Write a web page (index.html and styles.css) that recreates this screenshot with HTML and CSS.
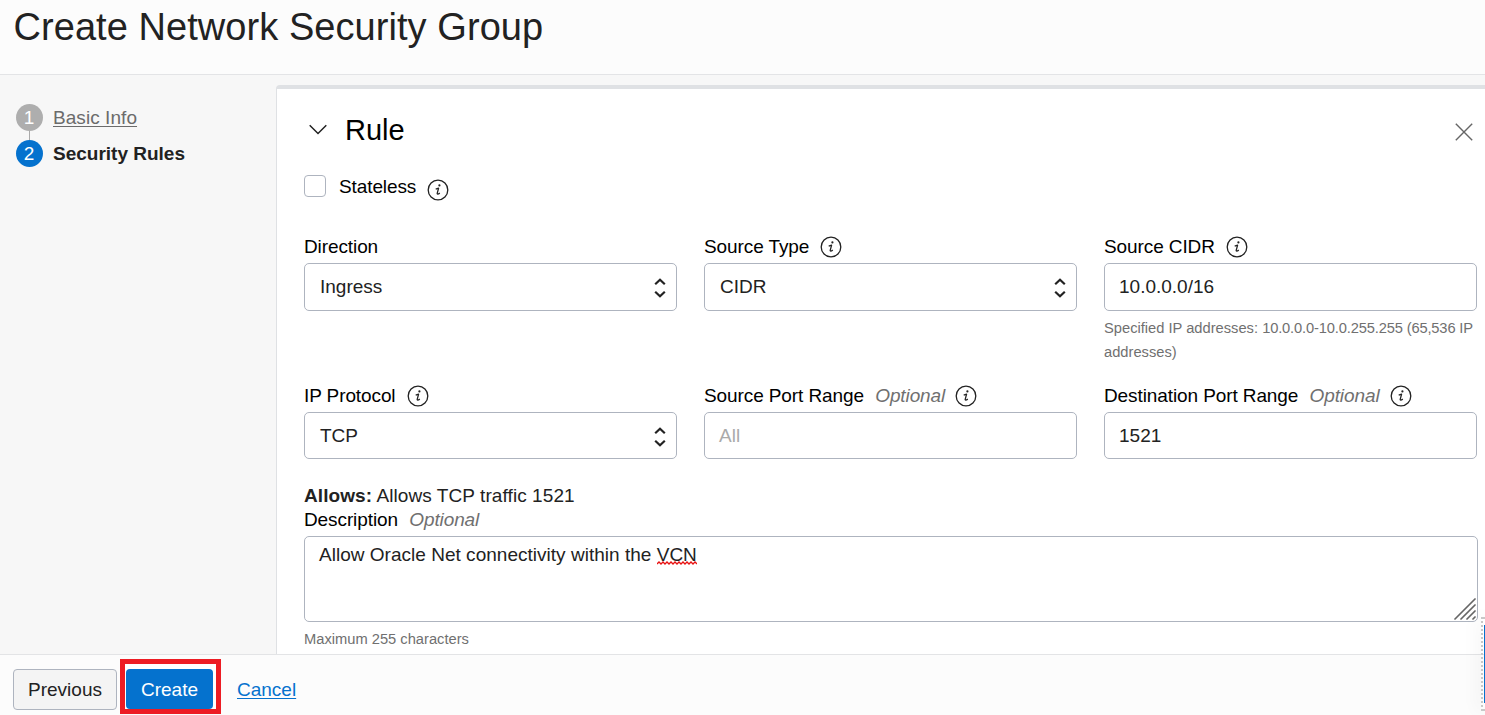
FILE: index.html
```html
<!DOCTYPE html>
<html lang="en">
<head>
<meta charset="utf-8">
<title>Create Network Security Group</title>
<link rel="stylesheet" href="styles.css">
</head>
<body>
<svg class="defs" width="0" height="0">
  <symbol id="info" viewBox="0 0 22 22">
    <circle cx="11" cy="11" r="9.8" fill="none" stroke="#222" stroke-width="1.3"/>
    <circle cx="12.4" cy="6.4" r="1.1" fill="#222"/>
    <path d="M8.7 10.2 L11.6 9.2 L10.2 14.4 Q10 16 12.8 14.1" fill="none" stroke="#222" stroke-width="1.3" stroke-linejoin="round"/>
  </symbol>
  <symbol id="updown" viewBox="0 0 12 20">
    <path d="M1.2 6.3 L6 1.8 L10.8 6.3 M1.2 13.7 L6 18.2 L10.8 13.7" fill="none" stroke="#222" stroke-width="2.2"/>
  </symbol>
</svg>
<div class="app">
  <header class="header"><h1 class="title">Create Network Security Group</h1></header>
  <main class="body">
    <nav class="steps">
      <div class="step"><span class="num">1</span><a class="step-link">Basic Info</a></div>
      <div class="line"></div>
      <div class="step active"><span class="num">2</span><span class="step-name">Security Rules</span></div>
    </nav>
    <section class="panel">
      <div class="rule-head">
        <svg class="chevron" viewBox="0 0 18 11"><path d="M.7 1.2 L9 9.5 L17.3 1.2" fill="none" stroke="#222" stroke-width="1.5"/></svg>
        <h2 class="rule-title">Rule</h2>
        <svg class="close" viewBox="0 0 18 18"><path d="M.8 .8 L17.2 17.2 M17.2 .8 L.8 17.2" stroke="#666" stroke-width="1.4"/></svg>
      </div>
      <div class="check-row"><span class="checkbox"></span><span class="label">Stateless</span><svg class="info low"><use href="#info"/></svg></div>
      <div class="grid first">
        <div class="field">
          <div class="label-row"><span class="label">Direction</span></div>
          <div class="control select"><span>Ingress</span><svg class="updown"><use href="#updown"/></svg></div>
        </div>
        <div class="field">
          <div class="label-row"><span class="label">Source Type</span><svg class="info"><use href="#info"/></svg></div>
          <div class="control select"><span>CIDR</span><svg class="updown"><use href="#updown"/></svg></div>
        </div>
        <div class="field">
          <div class="label-row"><span class="label">Source CIDR</span><svg class="info"><use href="#info"/></svg></div>
          <div class="control">10.0.0.0/16</div>
          <div class="hint">Specified IP addresses: <span class="range">10.0.0.0-10.0.255.255 (65,536 IP</span><br>addresses)</div>
        </div>
      </div>
      <div class="grid second">
        <div class="field">
          <div class="label-row"><span class="label">IP Protocol</span><svg class="info"><use href="#info"/></svg></div>
          <div class="control select"><span>TCP</span><svg class="updown"><use href="#updown"/></svg></div>
        </div>
        <div class="field">
          <div class="label-row"><span class="label">Source Port Range</span><span class="optional">Optional</span><svg class="info"><use href="#info"/></svg></div>
          <div class="control placeholder">All</div>
        </div>
        <div class="field">
          <div class="label-row"><span class="label">Destination Port Range</span><span class="optional">Optional</span><svg class="info"><use href="#info"/></svg></div>
          <div class="control">1521</div>
        </div>
      </div>
      <div class="allows"><b>Allows:</b> Allows TCP traffic 1521</div>
      <div class="label-row desc"><span class="label">Description</span><span class="optional">Optional</span></div>
      <div class="textarea">
        <span class="text">Allow Oracle Net connectivity within the <span class="misspelt">VCN<svg class="squiggle" viewBox="0 0 40 4"><path d="M0 3 L2 1 L4 3 L6 1 L8 3 L10 1 L12 3 L14 1 L16 3 L18 1 L20 3 L22 1 L24 3 L26 1 L28 3 L30 1 L32 3 L34 1 L36 3 L38 1 L40 3" fill="none" stroke="#e81010" stroke-width="1.3"/></svg></span></span>
        <svg class="grip" viewBox="0 0 22 22"><path d="M1 21 L21 1 M7 21 L21 7 M13 21 L21 13 M19 21 L21 19" stroke="#666" stroke-width="1.7" stroke-linecap="round"/></svg>
      </div>
      <div class="hint max">Maximum 255 characters</div>
    </section>
  </main>
  <footer class="footer">
    <button class="btn">Previous</button>
    <span class="highlight"><button class="btn primary">Create</button></span>
    <a class="cancel">Cancel</a>
  </footer>
  <div class="help-tab"><div class="help-fill"></div></div>
</div>
</body>
</html>
```
FILE: styles.css
```css
* { box-sizing: border-box; }
body { margin: 0; }
.defs { position: absolute; }
.app {
  position: relative;
  width: 1485px;
  height: 715px;
  overflow: hidden;
  display: flex;
  flex-direction: column;
  font-family: "Liberation Sans", Arial, sans-serif;
  font-size: 19px;
  line-height: 24px;
  color: #222;
  background: #fcfcfc;
}
.header { height: 75px; flex: none; border-bottom: 1px solid #e3e4e6; padding: 4px 0 0 13.5px; }
.title { margin: 0; font-size: 38px; line-height: 46px; font-weight: 400; letter-spacing: .06px; }
.body { display: flex; height: 579px; flex: none; background: #f7f7f7; overflow: hidden; }
.steps { width: 276px; flex: none; padding: 29px 0 0 15.5px; }
.step { display: flex; align-items: center; gap: 10.5px; height: 27px; }
.num { width: 27px; height: 27px; border-radius: 50%; background: #aeaeae; color: #fff; text-align: center; line-height: 27px; }
.active .num { background: #0572ce; }
.step-link { color: #6b6b6b; letter-spacing: .06px; text-decoration: underline; text-decoration-thickness: 1px; text-underline-offset: 2px; }
.step-name { font-weight: 700; }
.line { width: 1px; height: 9px; margin-left: 13px; background: #aaa; }
.panel { flex: none; width: 1220px; margin-top: 10px; padding-left: 27px; background: #fff; border-left: 1px solid #dfe1e4; border-top: 4px solid #dfe1e4; border-top-left-radius: 4px; }
.rule-head { display: flex; align-items: center; height: 40px; margin-top: 21px; padding-left: 5px; }
.chevron { width: 18px; height: 11px; margin-top: -2px; }
.rule-title { margin: 0 0 0 18px; font-size: 29px; line-height: 40px; font-weight: 400; color: #000; }
.close { width: 18px; height: 18px; margin: 3px 0 0 1050px; }
.check-row { display: flex; align-items: center; height: 24px; margin-top: 25px; }
.checkbox { width: 22px; height: 22px; margin: -3px 13px 0 0; border: 1px solid #aeb4bf; border-radius: 4px; }
.label { color: #000; white-space: nowrap; letter-spacing: -.1px; }
.info { width: 22px; height: 22px; flex: none; margin-left: 11px; }
.low { margin-top: 5px; }
.grid { display: grid; grid-template-columns: repeat(3, 373px); column-gap: 27px; }
.first { margin-top: 36px; height: 149px; }
.label-row { display: flex; align-items: center; height: 24px; }
.optional { margin-left: 11.3px; font-style: italic; color: #707070; letter-spacing: -.1px; }
.optional + .info { margin-left: 10.3px; }
.control { height: 48px; margin-top: 4px; padding: 0 14px; border: 1px solid #aeb4bf; border-radius: 5px; line-height: 45px; }
.second .control { height: 47px; }
.select { display: flex; justify-content: space-between; padding: 0 10px 0 15px; }
.updown { width: 12px; height: 20px; margin-top: 13.5px; }
.placeholder { color: #aaa; }
.hint { margin-top: 5px; font-size: 14.7px; line-height: 24px; color: #707070; white-space: nowrap; }
.range { letter-spacing: -.15px; }
.allows { margin-top: 25px; letter-spacing: .08px; }
.textarea { position: relative; width: 1174px; height: 86px; margin-top: 4px; padding: 6px 14px; border: 1px solid #aeb4bf; border-radius: 5px; }
.text { letter-spacing: .02px; }
.misspelt { position: relative; }
.squiggle { position: absolute; left: 0; bottom: 0; width: 40px; height: 4px; }
.grip { position: absolute; right: 1px; bottom: 1px; width: 22px; height: 22px; }
.footer { display: flex; flex: none; height: 61px; border-top: 1px solid #e3e4e6; background: #fcfcfc; padding: 4px 0 0 13px; }
.btn { width: 104px; height: 41px; margin-top: 10px; padding: 0; border: 1px solid #aeb4bf; border-radius: 4px; background: #f4f4f4; color: #222; font: 19px/39px "Liberation Sans", Arial, sans-serif; }
.highlight { width: 101px; height: 55px; margin-left: 3px; padding: 5px 0 0 1px; border: 5px solid #ed1c24; background: #fff; }
.primary { display: block; width: 87px; height: 40px; margin: 0; padding-top: 1px; border: 0; background: #0572ce; color: #fff; line-height: 39px; }
.cancel { margin: 19px 0 0 16px; color: #0572ce; text-decoration: underline; text-decoration-thickness: 1px; text-underline-offset: 2px; }
.help-tab { position: absolute; left: 1481px; top: 617px; width: 4px; height: 94px; border: 2px dotted #c8c8c8; border-right: 0; box-shadow: 0 0 18px rgba(0, 0, 0, .12); }
.help-fill { width: 1px; height: 78px; margin: 6px 0 0 1px; background: #0572ce; }
```
